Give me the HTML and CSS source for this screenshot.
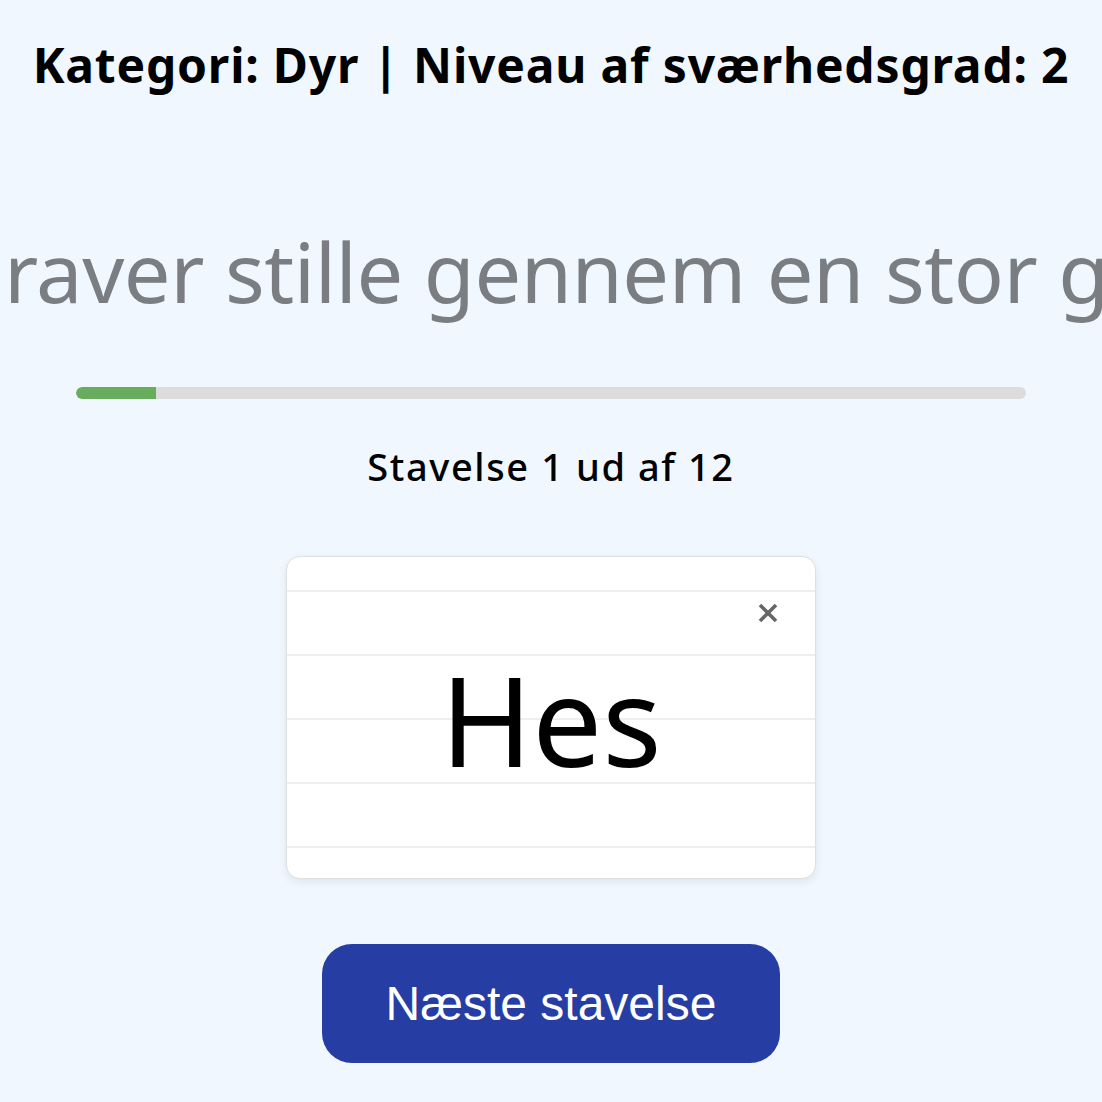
FILE: index.html
```html
<!DOCTYPE html>
<html lang="da">
<head>
<meta charset="utf-8">
<title>Stavelser</title>
<link rel="stylesheet" href="styles.css">
</head>
<body>
<main class="page">
  <h1 class="meta">Kategori: Dyr | Niveau af sværhedsgrad: 2</h1>
  <div class="ticker"><span class="ticker-text">raver stille gennem en stor græsmark</span></div>
  <div class="progress"><div class="progress-fill" style="width:8.42%"></div></div>
  <p class="count">Stavelse 1 ud af 12</p>
  <div class="card">
    <button class="close" aria-label="Luk">
      <svg width="22" height="22" viewBox="0 0 22 22"><path d="M3 3 L19 19 M19 3 L3 19" stroke="#666" stroke-width="3.6" stroke-linecap="butt" fill="none"/></svg>
    </button>
    <div class="syllable">Hes</div>
  </div>
  <button class="next">Næste stavelse</button>
</main>
</body>
</html>
```

FILE: styles.css
```css
html, body {
  margin: 0;
  padding: 0;
  background: #f0f7ff;
}

.page {
  display: flex;
  flex-direction: column;
  align-items: center;
  font-family: "Noto Sans", "Open Sans", sans-serif;
  color: #000;
  overflow: hidden;
  width: 1102px;
  height: 1102px;
}

.meta {
  margin: 36px 0 0;
  font-size: 48px;
  line-height: 57px;
  font-weight: 700;
  letter-spacing: 0.8px;
  white-space: nowrap;
}

.ticker {
  align-self: stretch;
  overflow: hidden;
  white-space: nowrap;
  margin-top: 118px;
  height: 120px;
}

.ticker-text {
  display: inline-block;
  padding-left: 4px;
  font-size: 83px;
  line-height: 120px;
  color: #7a7e82;
  letter-spacing: -0.5px;
}

.progress {
  width: 950px;
  height: 12px;
  margin-top: 56px;
  border-radius: 6px;
  background: #dcdcdc;
  overflow: hidden;
}

.progress-fill {
  height: 100%;
  background: #67ad5d;
  border-radius: 6px 0 0 6px;
}

.count {
  margin: 45px 0 0;
  font-size: 38px;
  line-height: 44px;
  font-weight: 500;
  letter-spacing: 1.6px;
}

.card {
  position: relative;
  box-sizing: border-box;
  width: 530px;
  height: 323px;
  margin-top: 68px;
  border: 1px solid #dedfe2;
  border-radius: 14px;
  background-color: #fff;
  background-image: repeating-linear-gradient(to bottom, #fff 0 33px, #eceef2 33px 35px, #fff 35px 64px);
  box-shadow: 0 3px 8px rgba(0, 0, 0, 0.08);
  display: flex;
  align-items: center;
  justify-content: center;
}

.close {
  position: absolute;
  top: 45px;
  right: 36px;
  width: 22px;
  height: 22px;
  padding: 0;
  border: 0;
  background: transparent;
  display: flex;
}

.syllable {
  font-size: 124px;
  line-height: 1;
  font-weight: 400;
  margin-top: 2px;
}

.next {
  margin-top: 65px;
  width: 458px;
  height: 119px;
  border: 0;
  border-radius: 30px;
  background: #263ea3;
  color: #fff;
  font-family: "Liberation Sans", Arial, sans-serif;
  font-size: 48px;
}
```
